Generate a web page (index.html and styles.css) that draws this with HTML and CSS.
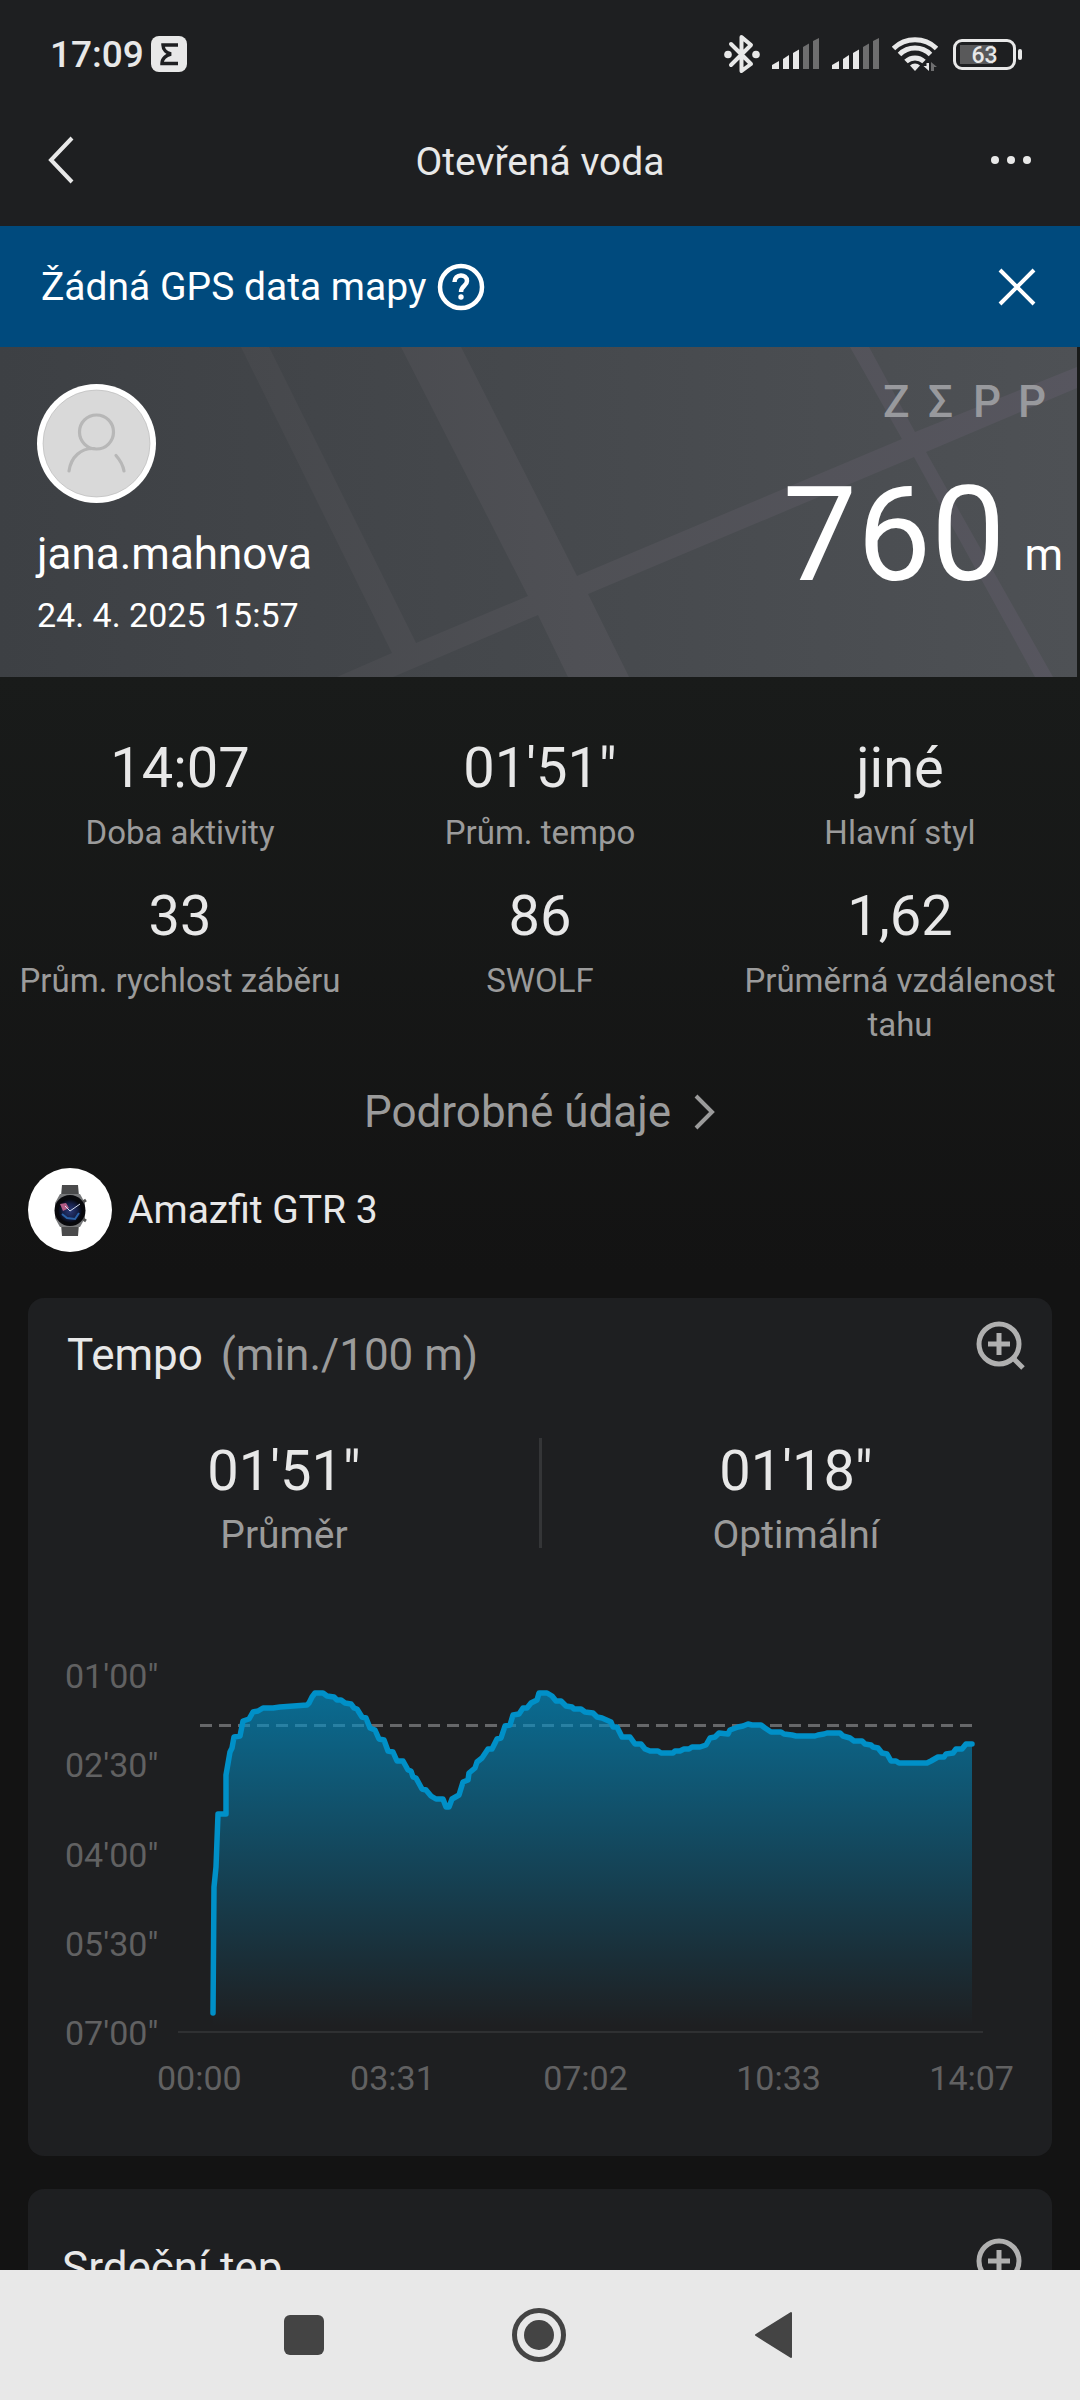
FILE: index.html
```html
<!DOCTYPE html>
<html lang="cs">
	<head>
		<meta charset="UTF-8">
		<meta name="viewport" content="width=device-width, initial-scale=1">
		<title>Otevřená voda</title>
		<link rel="stylesheet" href="styles.css">
	</head>
	<body>
		<div class="status">
			<span class="clock">17:09</span>
			<svg class="badge" width="36" height="36" viewBox="0 0 36 36">
				<rect width="36" height="36" rx="8" fill="#e8e8e8"/>
				<path d="M27 9H12C12 14 16 17 20 18C16 19 11 22 11 27.500H27" fill="none" stroke="#1e1f21" stroke-width="3.500"/>
			</svg>
			<div class="status-icons">
				<svg width="36" height="40" viewBox="0 0 36 40">
					<path d="M7 10L27 30L17.500 37V3L27 11L7 31" fill="none" stroke="#e8e8e8" stroke-width="4" stroke-linecap="round" stroke-linejoin="round"/>
					<circle cx="4" cy="20.500" r="3.800" fill="#e8e8e8"/>
					<circle cx="32" cy="20.500" r="3.800" fill="#e8e8e8"/>
				</svg>
				<svg class="signal" width="48" height="32" viewBox="0 0 48 32">
					<g fill="#e8e8e8"><path d="M0 31V27L7 23V31Z"/><path d="M11 31V21L17 17V31Z"/><path d="M21 31V15L27 11.500V31Z"/></g>
					<g fill="#6e6e6f"><path d="M31 31V9L37 5.500V31Z"/><path d="M41 31V3L47 0V31Z"/></g>
				</svg>
				<svg class="signal" width="48" height="32" viewBox="0 0 48 32">
					<g fill="#e8e8e8"><path d="M0 31V27L7 23V31Z"/><path d="M11 31V21L17 17V31Z"/><path d="M21 31V15L27 11.500V31Z"/></g>
					<g fill="#6e6e6f"><path d="M31 31V9L37 5.500V31Z"/><path d="M41 31V3L47 0V31Z"/></g>
				</svg>
				<svg class="wifi" width="46" height="36" viewBox="0 0 46 36">
					<g fill="none" stroke="#e8e8e8" stroke-width="5">
						<path d="M1.500 12.500A31 31 0 0 1 44.500 12.500"/>
						<path d="M7.500 18.500A22 22 0 0 1 38.500 18.500"/>
						<path d="M14 25.500A13 13 0 0 1 32 25.500"/>
					</g>
					<path d="M18 29.500A7 7 0 0 1 28 29.500L23 35Z" fill="#e8e8e8"/>
					<path d="M37 27V35L31.500 30H34.500V27Z" fill="#e8e8e8"/>
					<path d="M39 35V26L45 31H42V35Z" fill="#6e6e6f"/>
				</svg>
				<div class="battery"><span>63</span></div>
			</div>
		</div>
		<header class="topbar">
			<button class="icon-btn" aria-label="Zpět">
				<svg width="27" height="48" viewBox="0 0 27 48"><path d="M24 2L3 24L24 46" fill="none" stroke="#e8e8e8" stroke-width="4"/></svg>
			</button>
			<h1>Otevřená voda</h1>
			<button class="icon-btn" aria-label="Další">
				<svg width="42" height="10" viewBox="0 0 42 10" fill="#e8e8e8"><circle cx="5" cy="5" r="4"/><circle cx="21" cy="5" r="4"/><circle cx="37" cy="5" r="4"/></svg>
			</button>
		</header>
		<main>
			<div class="banner">
				<span>Žádná GPS data mapy</span>
				<button class="icon-btn" aria-label="Nápověda">
					<svg width="48" height="48" viewBox="0 0 48 48" fill="none" stroke="#fff">
						<circle cx="24" cy="24" r="21" stroke-width="4.500"/>
						<path d="M17.500 19C17.500 10.500 30 10.500 30 18C30 23 24 23 24 29" stroke-width="4.500"/>
						<circle cx="24" cy="34" r="2.700" fill="#fff" stroke="none"/>
					</svg>
				</button>
				<button class="icon-btn banner-close" aria-label="Zavřít">
					<svg width="38" height="38" viewBox="0 0 38 38"><path d="M2 2L36 36M36 2L2 36" stroke="#fff" stroke-width="4"/></svg>
				</button>
			</div>

			<section class="hero">
				<!-- streets of the map behind the summary -->
				<svg class="streets" viewBox="0 0 1077 330" preserveAspectRatio="none">
					<path fill="url(#street)" d="M241 0H269L416 296L528 249L401 0H461L577 229L902 92L850 0H869L915 85L1077 20V41L926 105L1053 330H1035L914 110L588 247L629 330H568L538 268L393 330H337L392 306Z"/>
					<defs>
						<linearGradient id="street"><stop offset="0" stop-color="#46484c"/><stop offset=".4" stop-color="#4f5055"/><stop offset="1" stop-color="#57565f"/></linearGradient>
					</defs>
				</svg>
				<div class="user">
					<svg class="avatar" width="119" height="119" viewBox="0 0 119 119">
						<circle cx="59.500" cy="59.500" r="59.500" fill="#fff"/>
						<circle cx="59.500" cy="59.500" r="53.500" fill="#d9d9d9" stroke="#b5b5b5" stroke-width=".6"/>
						<g fill="none" stroke="#b7b7b7" stroke-width="3.200" stroke-linecap="round">
							<circle cx="59.500" cy="48" r="17"/>
							<path d="M32 87C34 73 44 64 57 64.500"/>
							<path d="M79 71.500C83 76 86 81 87 87"/>
						</g>
					</svg>
					<p class="name">jana.mahnova</p>
					<p class="date">24. 4. 2025 15:57</p>
				</div>
				<div class="total">
					<p class="brand"><span>Z</span><span>Σ</span><span>P</span><span>P</span></p>
					<p class="distance">760 <small>m</small></p>
				</div>
			</section>

			<dl class="metrics">
				<div><dd>14:07</dd><dt>Doba aktivity</dt></div>
				<div><dd>01'51"</dd><dt>Prům. tempo</dt></div>
				<div><dd>jiné</dd><dt>Hlavní styl</dt></div>
				<div><dd>33</dd><dt>Prům. rychlost záběru</dt></div>
				<div><dd>86</dd><dt>SWOLF</dt></div>
				<div><dd>1,62</dd><dt>Průměrná vzdálenost tahu</dt></div>
			</dl>
			<a class="more" href="#">Podrobné údaje
				<svg width="22" height="36" viewBox="0 0 22 36"><path d="M2 2L18 18L2 34" fill="none" stroke="#9b9b9b" stroke-width="4"/></svg>
			</a>
			<div class="device">
				<svg width="84" height="84" viewBox="0 0 84 84">
					<defs>
						<radialGradient id="dial"><stop offset="0" stop-color="#2a3a78"/><stop offset=".6" stop-color="#16204a"/><stop offset="1" stop-color="#06070c"/></radialGradient>
					</defs>
					<circle cx="42" cy="42" r="42" fill="#fff"/>
					<path d="M34 17H50L51 28H33ZM33 56H51L50 68H34Z" fill="#4a4a4b"/>
					<path d="M32 26H52L57 35V50L52 59H32L27 50V35Z" fill="#77787a"/>
					<path d="M55 34L58 32M55 51L58 53" stroke="#555" stroke-width="3"/>
					<circle cx="42" cy="42.500" r="15.500" fill="#08080c"/>
					<circle cx="42" cy="43" r="12" fill="url(#dial)"/>
					<path d="M32 36L38 35L41 40L35 43Z" fill="#b35c86"/>
					<path d="M34 46L39 50L47 51L51 45" fill="none" stroke="#2b62a8" stroke-width="2"/>
					<path d="M37 38L42 43L52 36" fill="none" stroke="#d5dcef" stroke-width="1"/>
				</svg>
				<span>Amazfit GTR 3</span>
			</div>

			<section class="card">
				<div class="card-head">
					<h2>Tempo <small>(min./100 m)</small></h2>
					<button class="icon-btn" aria-label="Zvětšit">
						<svg width="50" height="50" viewBox="0 0 50 50" fill="none" stroke="#b0b0b0" stroke-width="5"><circle cx="23" cy="23" r="20"/><path d="M12 23H34M23 12V34M37 37L47 47"/></svg>
					</button>
				</div>
				<dl class="pair">
					<div><dd>01'51"</dd><dt>Průměr</dt></div>
					<div><dd>01'18"</dd><dt>Optimální</dt></div>
				</dl>
				<div class="chart">
					<div class="y-axis"><span>01'00"</span><span>02'30"</span><span>04'00"</span><span>05'30"</span><span>07'00"</span></div>
					<svg class="plot" viewBox="178 1657 805 377" preserveAspectRatio="none">
						<defs>
							<linearGradient id="water" gradientUnits="userSpaceOnUse" x1="0" y1="1690" x2="0" y2="2026">
								<stop offset="0" stop-color="#0090c8" stop-opacity=".68"/>
								<stop offset="1" stop-color="#0090c8" stop-opacity="0"/>
							</linearGradient>
						</defs>
						<path d="M178 2032H983" stroke="#2f3032" stroke-width="2"/>
						<path d="M200 1725.500H973" stroke="#666769" stroke-width="3" stroke-dasharray="12 7"/>
						<path fill="url(#water)" d="M213 2032V2013L214 1887L216 1867L218 1814H226V1775L230 1752L232 1748L234 1737L240 1736L243 1721L249 1719L253 1712L258 1711L263 1708H273L280 1707L307 1705L309 1703L312 1697L315 1693H323L327 1696L334 1697L337 1700H341L345 1703L351 1704L354 1708L357 1709L362 1717L366 1718L370 1728L375 1730L379 1739L384 1740L388 1751L393 1752L397 1761H403L408 1770L411 1771L413 1777L416 1778L422 1789L426 1790L431 1796L436 1799H443L446 1807H449L452 1799L459 1795L463 1782L468 1780L469 1773L475 1768L477 1762L482 1758L488 1749H492L497 1739L501 1738L505 1726L510 1725L513 1715L519 1714L523 1708H527L531 1703L537 1700L539 1693H547L552 1696L556 1701H561L566 1706L572 1707L574 1709H581L585 1712L593 1713L597 1717L602 1718L611 1722L613 1727H617L622 1737H630L635 1744H641L645 1749L650 1751H658L661 1753H673L675 1751H680L684 1749H689L692 1747H700L706 1745L710 1738L715 1737L719 1733L728 1734L730 1730L738 1727L743 1726L748 1724L752 1725H761L765 1728L771 1732H781L784 1734L792 1735L796 1736H815L818 1735L824 1734L827 1733H840L843 1736L850 1738L854 1741H862L865 1744L871 1745L873 1747L878 1748L882 1753L887 1754L891 1761H896L899 1763H927L931 1761L938 1757H944L946 1754L953 1753L956 1749H962L966 1744H972V2032Z"/>
						<path fill="none" stroke="#0090c8" stroke-width="5.500" stroke-linecap="round" stroke-linejoin="round" d="M213 2013L214 1887L216 1867L218 1814H226V1775L230 1752L232 1748L234 1737L240 1736L243 1721L249 1719L253 1712L258 1711L263 1708H273L280 1707L307 1705L309 1703L312 1697L315 1693H323L327 1696L334 1697L337 1700H341L345 1703L351 1704L354 1708L357 1709L362 1717L366 1718L370 1728L375 1730L379 1739L384 1740L388 1751L393 1752L397 1761H403L408 1770L411 1771L413 1777L416 1778L422 1789L426 1790L431 1796L436 1799H443L446 1807H449L452 1799L459 1795L463 1782L468 1780L469 1773L475 1768L477 1762L482 1758L488 1749H492L497 1739L501 1738L505 1726L510 1725L513 1715L519 1714L523 1708H527L531 1703L537 1700L539 1693H547L552 1696L556 1701H561L566 1706L572 1707L574 1709H581L585 1712L593 1713L597 1717L602 1718L611 1722L613 1727H617L622 1737H630L635 1744H641L645 1749L650 1751H658L661 1753H673L675 1751H680L684 1749H689L692 1747H700L706 1745L710 1738L715 1737L719 1733L728 1734L730 1730L738 1727L743 1726L748 1724L752 1725H761L765 1728L771 1732H781L784 1734L792 1735L796 1736H815L818 1735L824 1734L827 1733H840L843 1736L850 1738L854 1741H862L865 1744L871 1745L873 1747L878 1748L882 1753L887 1754L891 1761H896L899 1763H927L931 1761L938 1757H944L946 1754L953 1753L956 1749H962L966 1744H972"/>
					</svg>
				</div>
				<div class="x-axis"><span>00:00</span><span>03:31</span><span>07:02</span><span>10:33</span><span>14:07</span></div>
			</section>

			<section class="card card-heart">
				<div class="card-head">
					<h2>Srdeční tep</h2>
					<button class="icon-btn" aria-label="Zvětšit">
						<svg width="50" height="50" viewBox="0 0 50 50" fill="none" stroke="#b0b0b0" stroke-width="5"><circle cx="23" cy="23" r="20"/><path d="M12 23H34M23 12V34M37 37L47 47"/></svg>
					</button>
				</div>
			</section>
		</main>
		<nav class="navbar">
			<button class="icon-btn" aria-label="Aplikace">
				<svg width="40" height="40" viewBox="0 0 40 40"><rect width="40" height="40" rx="6" fill="#444"/></svg>
			</button>
			<button class="icon-btn" aria-label="Domů">
				<svg width="56" height="56" viewBox="0 0 56 56"><circle cx="28" cy="28" r="24.500" fill="none" stroke="#444" stroke-width="5"/><circle cx="28" cy="28" r="15" fill="#444"/></svg>
			</button>
			<button class="icon-btn" aria-label="Zpět">
				<svg width="40" height="48" viewBox="0 0 40 48"><path d="M2 24L37 2V46Z" fill="#444" stroke="#444" stroke-width="2" stroke-linejoin="round"/></svg>
			</button>
		</nav>
	</body>
</html>
```
FILE: styles.css
```css
*{
	margin: 0;
	padding: 0;
	box-sizing: border-box;
}
body{
	height: 100vh;
	display: flex;
	flex-direction: column;
	overflow: hidden;
	background: #131313;
	color: #e8e8e8;
	font-family: Roboto, "Noto Sans", sans-serif;
}
svg{
	display: block;
	flex: none;
}
h1, h2, small{
	font-weight: 400;
}
.icon-btn{
	border: 0;
	background: none;
	cursor: pointer;
}

/* status bar */
.status{
	height: 108px;
	flex: none;
	display: flex;
	align-items: center;
	padding: 0 60px 0 50px;
	background: #1e1f21;
}
.clock{
	font-size: 37px;
	font-weight: 500;
}
.badge{
	margin-left: 7px;
}
.status-icons{
	margin-left: auto;
	display: flex;
	align-items: center;
	gap: 12px;
}
.battery{
	width: 63px;
	height: 31px;
	border: 3px solid #e8e8e8;
	border-radius: 9px;
	margin: 0 4px 0 3px;
	position: relative;
	background: linear-gradient(#59595a, #59595a) 4px 3px / 33px 19px no-repeat;
	font-size: 23px;
	font-weight: 500;
	line-height: 27px;
	text-align: center;
}
.battery::after{
	content: "";
	position: absolute;
	right: -9px;
	top: 7px;
	width: 4px;
	height: 11px;
	border-radius: 2px;
	background: #e8e8e8;
}

/* header */
.topbar{
	height: 118px;
	flex: none;
	display: grid;
	grid-template-columns: 1fr auto 1fr;
	align-items: center;
	padding: 0 48px 14px;
	background: #1e1f21;
}
.topbar .icon-btn{
	justify-self: start;
}
.topbar .icon-btn:last-child{
	justify-self: end;
}
.topbar h1{
	font-size: 39px;
	line-height: 48px;
	padding-top: 4px;
}
main{
	flex: 1;
	min-height: 0;
	overflow: hidden;
	background: linear-gradient(#191b1a 450px, #131313 1050px);
}
.banner{
	height: 121px;
	display: flex;
	align-items: center;
	gap: 11px;
	padding: 0 44px 0 41px;
	background: #004a7d;
	color: #fff;
	font-size: 39px;
}
.banner-close{
	margin-left: auto;
}

/* activity summary */
.hero{
	height: 330px;
	margin-right: 3px;
	position: relative;
	display: flex;
	justify-content: space-between;
	background: linear-gradient(90deg, #3d4044, #4e5155);
	color: #fff;
}
.streets{
	position: absolute;
	top: 0;
	left: 0;
	width: 100%;
	height: 100%;
}
.user{
	position: relative;
	padding: 37px 0 0 37px;
}
.name{
	margin-top: 21px;
	font-size: 44px;
	line-height: 60px;
}
.date{
	margin-top: 12px;
	font-size: 34px;
	line-height: 38px;
}
.total{
	position: relative;
	padding: 29px 14px 0 0;
}
.brand{
	display: grid;
	grid-template-columns: repeat(4, 26px);
	justify-content: end;
	gap: 19px;
	padding-right: 19px;
	color: #98999d;
	font-size: 44px;
	font-weight: 500;
	line-height: 52px;
}
.distance{
	display: flex;
	align-items: flex-end;
	gap: 19px;
	margin-top: 41px;
	font-size: 132px;
	line-height: 132px;
}
.distance small{
	padding-bottom: 16px;
	font-size: 44px;
	line-height: 60px;
}
.metrics{
	display: grid;
	grid-template-columns: repeat(3, 1fr);
	row-gap: 28px;
	padding-top: 58px;
	text-align: center;
}
.metrics > div, .pair > div{
	display: flex;
	flex-direction: column;
}
dd{
	font-size: 56px;
	line-height: 66px;
}
dt{
	color: #9b9b9b;
}
.metrics dt{
	margin-top: 10px;
	padding: 0 12px;
	font-size: 33px;
	line-height: 44px;
}
.more{
	display: flex;
	align-items: center;
	justify-content: center;
	gap: 23px;
	margin-top: 35px;
	color: #9b9b9b;
	font-size: 44px;
	line-height: 60px;
	text-decoration: none;
}
.device{
	display: flex;
	align-items: center;
	gap: 16px;
	margin: 26px 28px 46px;
	font-size: 39px;
}

/* cards */
.card{
	margin: 0 28px 33px;
	padding: 23px 0 59px;
	border-radius: 16px;
	background: #1e1f21;
}
.card-head{
	height: 64px;
	display: flex;
	justify-content: space-between;
	align-items: flex-start;
	padding: 0 26px 0 39px;
}
.card h2{
	font-size: 44px;
	line-height: 60px;
	padding-top: 4px;
}
.card h2 small{
	margin-left: 7px;
	font-size: 44px;
	color: #9b9b9b;
}
.pair{
	display: grid;
	grid-template-columns: 1fr 1fr;
	margin-top: 53px;
	text-align: center;
	background: linear-gradient(#343537, #343537) 50% 0 / 3px 110px no-repeat;
}
.pair dt{
	margin-top: 7px;
	font-size: 39px;
	line-height: 48px;
}
.chart{
	display: flex;
	align-items: flex-start;
	margin-top: 98px;
	padding: 0 69px 0 37px;
}
.y-axis{
	height: 395px;
	width: 113px;
	flex: none;
	display: flex;
	flex-direction: column;
	justify-content: space-between;
}
.y-axis, .x-axis{
	color: #616162;
	font-size: 34px;
	line-height: 38px;
}
.plot{
	flex: 1;
	min-width: 0;
	height: 377px;
	overflow: visible;
}
.x-axis{
	display: flex;
	justify-content: space-between;
	margin-top: 7px;
	padding: 0 38px 0 129px;
}
.card-heart{
	padding-top: 49px;
}
.card-heart .card-head{
	padding-left: 34px;
}
.card-heart h2{
	padding-top: 0;
}

/* system navigation */
.navbar{
	height: 130px;
	flex: none;
	display: flex;
	align-items: center;
	justify-content: center;
	gap: 187px;
	padding-right: 2px;
	background: #e8e8e8;
}
```
